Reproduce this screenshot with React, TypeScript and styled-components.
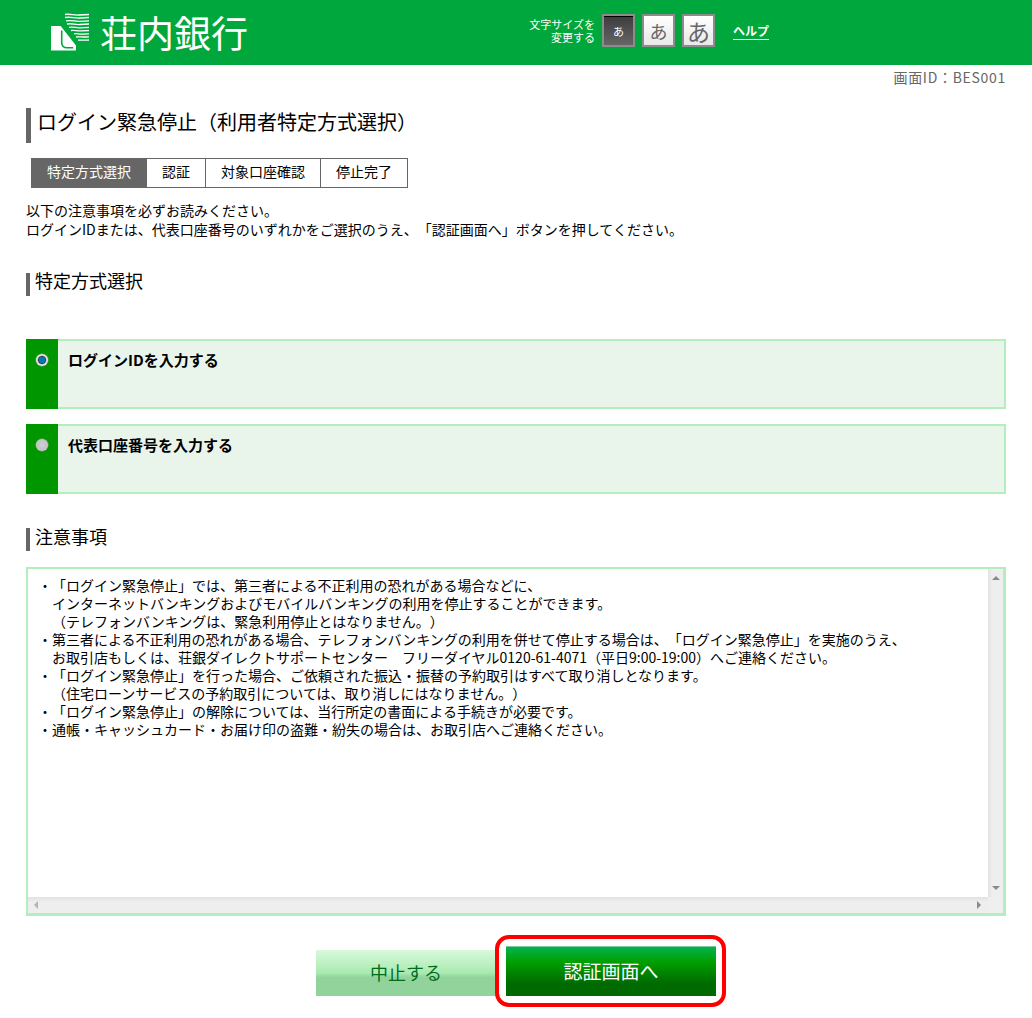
import styled, { createGlobalStyle } from "styled-components";

const GlobalStyle = createGlobalStyle`
  html, body {
    margin: 0;
    padding: 0;
    background: #ffffff;
  }
  body {
    width: 1032px;
    height: 1018px;
    overflow: hidden;
    font-family: "Noto Sans CJK JP", "Liberation Sans", sans-serif;
    color: #000000;
    text-spacing-trim: space-all;
  }
`;

const notices = [
  "・「ログイン緊急停止」では、第三者による不正利用の恐れがある場合などに、",
  "　インターネットバンキングおよびモバイルバンキングの利用を停止することができます。",
  "　（テレフォンバンキングは、緊急利用停止とはなりません。）",
  "・第三者による不正利用の恐れがある場合、テレフォンバンキングの利用を併せて停止する場合は、「ログイン緊急停止」を実施のうえ、",
  "　お取引店もしくは、荘銀ダイレクトサポートセンター　フリーダイヤル0120-61-4071（平日9:00-19:00）へご連絡ください。",
  "・「ログイン緊急停止」を行った場合、ご依頼された振込・振替の予約取引はすべて取り消しとなります。",
  "　（住宅ローンサービスの予約取引については、取り消しにはなりません。）",
  "・「ログイン緊急停止」の解除については、当行所定の書面による手続きが必要です。",
  "・通帳・キャッシュカード・お届け印の盗難・紛失の場合は、お取引店へご連絡ください。",
];

const steps = ["特定方式選択", "認証", "対象口座確認", "停止完了"];

function BankMark() {
  return (
    <svg width="40" height="40" viewBox="0 0 40 40">
      <g fill="none" stroke="#ffffff" strokeWidth="1.3">
        <path d="M15 1.500c5 -1 9 1 14 .5s6 -.5 10 -.5" />
        <path d="M15 4.500c6 -1 10 1 15 .5s5 -.5 9 -.5" />
        <path d="M16 7.800c6 -1 9 1 14 .5s5 -.5 9 -.5" />
        <path d="M17 11c5 -1 8 1 13 .5s5 -.5 9 -.5" />
        <path d="M19 14.300c5 -1 7 1 11 .5s5 -.5 9 -.5" />
        <path d="M21 17.500c4 -.6 6 .6 9 .4s5 -.4 9 -.4" />
        <path d="M24 20.800c4 -.6 4 .6 7 .4s4 -.4 8 -.4" />
        <path d="M26 24c3 -.4 6 .4 13 -.2" />
        <path d="M28 27.200c3 -.4 5 .4 11 -.2" />
      </g>
      <path d="M1 13h9.700L26 32.500v5H1z" fill="#ffffff" />
      <path
        d="M11.700 17.500v12c0 3.500 2.500 5.300 5.500 5.300h6"
        fill="none"
        stroke="#00a73c"
        strokeWidth="1.600"
      />
    </svg>
  );
}

export default function App() {
  return (
    <>
      <GlobalStyle />
      <Header>
        <BankMark />
        <BankName>荘内銀行</BankName>
        <SizeLabel>
          文字サイズを
          <br />
          変更する
        </SizeLabel>
        <SizeButton $active $size={11}>
          あ
        </SizeButton>
        <SizeButton $size={18}>あ</SizeButton>
        <SizeButton $size={23}>あ</SizeButton>
        <HelpLink href="#">ヘルプ</HelpLink>
      </Header>
      <Main>
        <ScreenId>画面ID：BES001</ScreenId>
        <PageTitle>ログイン緊急停止（利用者特定方式選択）</PageTitle>
        <StepList>
          {steps.map((step, i) => (
            <Step key={step} $current={i === 0}>
              {step}
            </Step>
          ))}
        </StepList>
        <Lead>
          以下の注意事項を必ずお読みください。
          <br />
          ログインIDまたは、代表口座番号のいずれかをご選択のうえ、「認証画面へ」ボタンを押してください。
        </Lead>
        <SectionTitle>特定方式選択</SectionTitle>
        <OptionRow>
          <RadioCell>
            <Radio type="radio" name="method" defaultChecked />
          </RadioCell>
          <OptionLabel>ログインIDを入力する</OptionLabel>
        </OptionRow>
        <OptionRow $second>
          <RadioCell>
            <Radio type="radio" name="method" />
          </RadioCell>
          <OptionLabel>代表口座番号を入力する</OptionLabel>
        </OptionRow>
        <NoticeTitle>注意事項</NoticeTitle>
        <NoticeBox>
          <NoticeText>{notices.join("\n")}</NoticeText>
          <VerticalBar>
            <ArrowUp />
            <ArrowDown />
          </VerticalBar>
          <HorizontalBar>
            <ArrowLeft />
            <ArrowRight />
          </HorizontalBar>
          <BarCorner />
        </NoticeBox>
        <ButtonRow>
          <CancelButton>中止する</CancelButton>
          <Highlight>
            <NextButton>認証画面へ</NextButton>
          </Highlight>
        </ButtonRow>
      </Main>
    </>
  );
}

const Header = styled.header`
  display: flex;
  align-items: center;
  height: 65px;
  padding-left: 50px;
  background: #00a73c;
`;

const BankName = styled.div`
  margin-left: 10px;
  width: 429px;
  font-size: 37px;
  line-height: 65px;
  font-weight: 400;
  color: #ffffff;
`;

const SizeLabel = styled.div`
  width: 66px;
  margin-top: -3px;
  font-size: 11px;
  line-height: 13px;
  text-align: right;
  color: #ffffff;
`;

const SizeButton = styled.div<{ $active?: boolean; $size: number }>`
  box-sizing: border-box;
  display: flex;
  align-items: center;
  justify-content: center;
  width: 33px;
  height: 33px;
  margin-left: 7px;
  margin-top: -4px;
  border: 2px solid #8c8c8c;
  background: ${(p) =>
    p.$active
      ? "linear-gradient(#3c3c3c, #666666)"
      : "linear-gradient(#ffffff, #e8e8e8)"};
  box-shadow: ${(p) => (p.$active ? "inset 0 1px 0 #000000" : "none")};
  font-size: ${(p) => p.$size}px;
  color: ${(p) => (p.$active ? "#ffffff" : "#666666")};
`;

const HelpLink = styled.a`
  margin-left: 18px;
  margin-top: -4px;
  font-size: 12px;
  font-weight: 700;
  line-height: 18px;
  color: #ffffff;
  text-decoration: underline;
  text-underline-offset: 3px;
`;

const Main = styled.main`
  padding: 0 26px;
`;

const ScreenId = styled.div`
  height: 24px;
  font-size: 14px;
  line-height: 24px;
  letter-spacing: 0.7px;
  text-align: right;
  color: #666666;
`;

const PageTitle = styled.h1`
  height: 35px;
  margin: 19px 0 0;
  padding-left: 6px;
  border-left: 5px solid #666666;
  font-size: 20px;
  font-weight: 400;
  line-height: 28px;
`;

const StepList = styled.ol`
  display: flex;
  width: max-content;
  margin: 15px 0 0 5px;
  padding: 0;
  list-style: none;
  border: 1px solid #666666;
`;

const Step = styled.li<{ $current?: boolean }>`
  padding: 0 15px 4px;
  font-size: 14px;
  line-height: 24px;
  background: ${(p) => (p.$current ? "#666666" : "#ffffff")};
  color: ${(p) => (p.$current ? "#ffffff" : "#000000")};
  & + & {
    border-left: 1px solid #666666;
  }
`;

const Lead = styled.p`
  margin: 13px 0 0;
  font-size: 14px;
  line-height: 19px;
`;

const SectionTitle = styled.h2`
  height: 23px;
  margin: 34px 0 0;
  padding-left: 5px;
  border-left: 4px solid #666666;
  font-size: 18px;
  font-weight: 400;
  line-height: 15px;
`;

const OptionRow = styled.div<{ $second?: boolean }>`
  box-sizing: border-box;
  display: flex;
  height: 70px;
  margin-top: ${(p) => (p.$second ? "15px" : "43px")};
  border: 2px solid #b5eebd;
  border-left: 0;
  background: #e9f4ea;
`;

const RadioCell = styled.div`
  width: 32px;
  margin: -2px 0;
  padding-top: 15px;
  background: #009600;
  text-align: center;
`;

const Radio = styled.input`
  appearance: none;
  display: block;
  width: 12px;
  height: 12px;
  margin: 0 auto;
  border-radius: 50%;
  background: radial-gradient(circle, #d0d0d0 0, #c4c4c4 55%, #f2f2f2 100%);
  box-shadow: 0 0 0 0.5px #9a9a9a;
  &:checked {
    background: radial-gradient(circle, #0079b8 0, #0079b8 34%, #2c3f4c 42%, #e6e6e6 56%, #f4f4f4 100%);
  }
`;

const OptionLabel = styled.div`
  padding: 7px 0 0 10px;
  font-size: 15px;
  font-weight: 700;
  line-height: 24px;
`;

const NoticeTitle = styled(SectionTitle)`
  margin-top: 34px;
  line-height: 16px;
`;

const NoticeBox = styled.div`
  box-sizing: border-box;
  display: grid;
  grid-template-columns: 1fr 15px;
  grid-template-rows: 1fr 16px;
  height: 349px;
  margin-top: 16px;
  border: 2px solid #b5eebd;
  border-right-width: 3px;
  border-bottom-width: 3px;
`;

const NoticeText = styled.div`
  padding: 7px 10px;
  font-size: 14px;
  line-height: 18px;
  white-space: pre;
  overflow: hidden;
`;

const VerticalBar = styled.div`
  display: flex;
  flex-direction: column;
  justify-content: space-between;
  align-items: center;
  padding: 7px 0;
  background: linear-gradient(90deg, #e2e2e2, #eeeeee 30%);
`;

const HorizontalBar = styled.div`
  display: flex;
  justify-content: space-between;
  align-items: center;
  padding: 0 7px 0 6px;
  background: linear-gradient(#e2e2e2, #eeeeee 30%);
`;

const BarCorner = styled.div`
  background: #efefef;
`;

const ArrowUp = styled.i`
  border: 4px solid transparent;
  border-top: 0;
  border-bottom: 4px solid #8a8a8a;
`;

const ArrowDown = styled.i`
  border: 4px solid transparent;
  border-bottom: 0;
  border-top: 4px solid #8a8a8a;
`;

const ArrowLeft = styled.i`
  border: 4px solid transparent;
  border-left: 0;
  border-right: 4px solid #b4b4b4;
`;

const ArrowRight = styled.i`
  border: 4px solid transparent;
  border-right: 0;
  border-left: 4px solid #8a8a8a;
`;

const ButtonRow = styled.div`
  display: flex;
  align-items: flex-end;
  margin-top: 19px;
  padding-left: 290px;
`;

const CancelButton = styled.button`
  width: 180px;
  height: 46px;
  margin-bottom: 11px;
  padding: 0 0 2px;
  border: 0;
  background: linear-gradient(#d9f9dc, #a9eab0 50%, #92d29b 60%);
  font-family: inherit;
  font-size: 18px;
  color: #006d1c;
`;

const Highlight = styled.div`
  box-sizing: border-box;
  width: 231px;
  height: 72px;
  margin-left: -1px;
  padding: 7px 7px;
  border: 4px solid #ff0000;
  border-radius: 14px;
  background: #ffffff;
`;

const NextButton = styled.button`
  display: block;
  width: 210px;
  height: 50px;
  padding: 0 0 3px;
  border: 0;
  border-top: 1px solid #7fc79a;
  background: linear-gradient(#04b24f, #00a000 30%, #006a00 75%);
  font-family: inherit;
  font-size: 19px;
  color: #ffffff;
`;
